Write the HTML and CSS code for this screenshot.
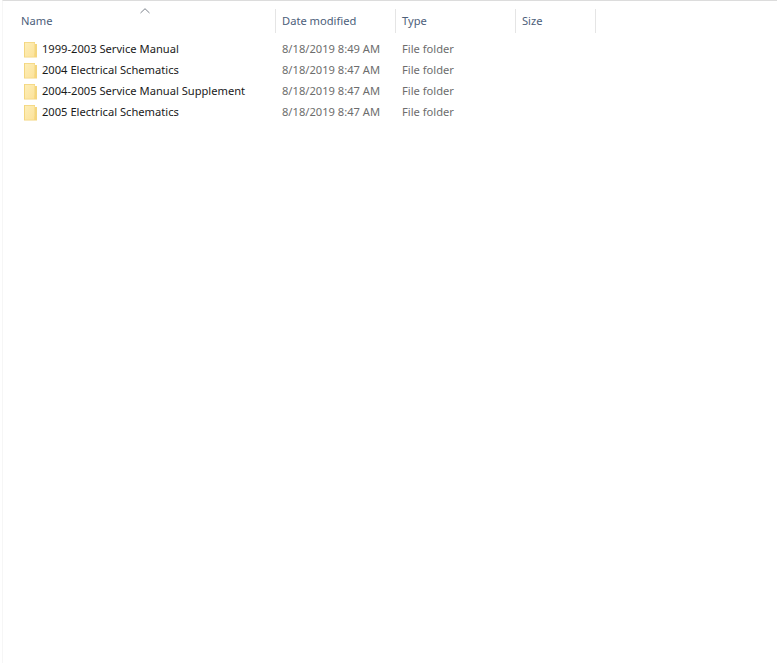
FILE: index.html
```html
<!DOCTYPE html>
<html lang="en">
<head>
<meta charset="utf-8">
<title>File list</title>
<link rel="stylesheet" href="styles.css">
</head>
<body>
<main class="pane">
  <div class="sort-row"><svg class="caret" width="10" height="6" viewBox="0 0 10 6"><path d="M.5 5 5 .7 9.500 5" fill="none" stroke="#7d838c" stroke-width="1"/></svg></div>
  <div class="header">
    <div class="col col-name">Name</div>
    <div class="col col-date">Date modified</div>
    <div class="col col-type">Type</div>
    <div class="col col-size">Size</div>
  </div>
  <div class="rows">
    <div class="row"><div class="cell-name"><svg class="folder" width="14" height="16" viewBox="0 0 14 16"><use href="#f"/></svg><span class="label">1999-2003 Service Manual</span></div><div class="cell date">8/18/2019 8:49 AM</div><div class="cell type">File folder</div></div>
    <div class="row"><div class="cell-name"><svg class="folder" width="14" height="16" viewBox="0 0 14 16"><use href="#f"/></svg><span class="label">2004 Electrical Schematics</span></div><div class="cell date">8/18/2019 8:47 AM</div><div class="cell type">File folder</div></div>
    <div class="row"><div class="cell-name"><svg class="folder" width="14" height="16" viewBox="0 0 14 16"><use href="#f"/></svg><span class="label">2004-2005 Service Manual Supplement</span></div><div class="cell date">8/18/2019 8:47 AM</div><div class="cell type">File folder</div></div>
    <div class="row"><div class="cell-name"><svg class="folder" width="14" height="16" viewBox="0 0 14 16"><use href="#f"/></svg><span class="label">2005 Electrical Schematics</span></div><div class="cell date">8/18/2019 8:47 AM</div><div class="cell type">File folder</div></div>
  </div>
</main>
<svg class="defs" width="0" height="0"><defs>
  <linearGradient id="g" x1="0" y1="0" x2="1" y2="1"><stop offset="0" stop-color="#fdeeb8"/><stop offset="1" stop-color="#fce29a"/></linearGradient>
  <symbol id="f" viewBox="0 0 14 16">
    <path d="M0 0h11v2h2v13.500H0z" fill="#f3d67f"/>
    <path d="M1 .8h9.500V14.700H1z" fill="url(#g)"/>
    <path d="M10.500 11.500 12.500 10v5h-2z" fill="#f6d57e"/>
  </symbol>
</defs></svg>
</body>
</html>
```
FILE: styles.css
```css
html, body { margin: 0; height: 100%; background: #fff; overflow: hidden; }
body { font-family: "Noto Sans", "Open Sans", sans-serif; font-size: 11.15px; }
.pane {
  box-sizing: border-box;
  height: 663px;
  margin-left: 2px;
  border-top: 1px solid #dcdcdc;
  border-left: 1px solid #f6f6f6;
}
.sort-row { height: 8px; position: relative; }
.caret { position: absolute; left: 137px; top: 7px; }
.header { display: flex; height: 24px; }
.col { box-sizing: border-box; color: #4c607a; line-height: 24px; padding-left: 6px; border-right: 1px solid #e5e5e5; white-space: nowrap; }
.col-name { width: 273px; padding-left: 18px; }
.col-date { width: 120px; }
.col-type { width: 120px; }
.col-size { width: 80px; }
.rows { margin-top: 6px; }
.row { display: flex; height: 21px; align-items: center; white-space: nowrap; }
.cell-name { width: 273px; display: flex; align-items: center; color: #1a1a1a; padding-left: 21px; box-sizing: border-box; }
.folder { margin-right: 4px; flex: none; }
.label { padding-bottom: 2px; }
.cell { color: #6d6d6d; padding-left: 6px; padding-bottom: 2px; box-sizing: border-box; }
.date { width: 120px; }
.type { width: 120px; }
.defs { position: absolute; }
```
